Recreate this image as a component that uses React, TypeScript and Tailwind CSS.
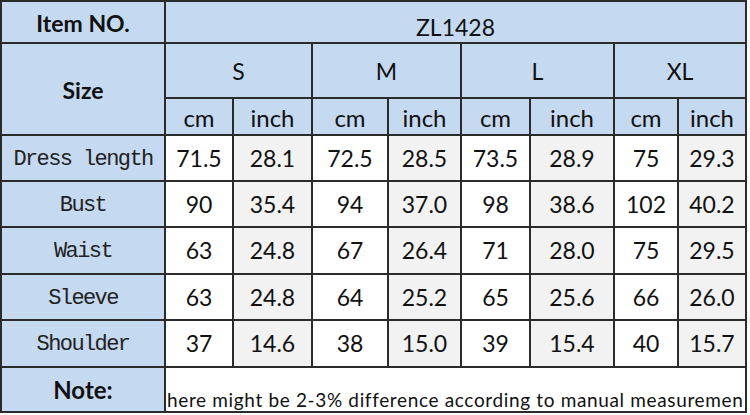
import React from 'react';

const sizes = ['S', 'M', 'L', 'XL'];

const rows: { label: string; values: string[] }[] = [
  { label: 'Dress length', values: ['71.5', '28.1', '72.5', '28.5', '73.5', '28.9', '75', '29.3'] },
  { label: 'Bust', values: ['90', '35.4', '94', '37.0', '98', '38.6', '102', '40.2'] },
  { label: 'Waist', values: ['63', '24.8', '67', '26.4', '71', '28.0', '75', '29.5'] },
  { label: 'Sleeve', values: ['63', '24.8', '64', '25.2', '65', '25.6', '66', '26.0'] },
  { label: 'Shoulder', values: ['37', '14.6', '38', '15.0', '39', '15.4', '40', '15.7'] },
];

const sans = "font-['Lato','Open_Sans',sans-serif]";
const mono = "font-['Liberation_Mono','DejaVu_Sans_Mono',monospace]";

export default function App() {
  return (
    <div className="w-[750px] h-[415px] bg-white text-[#111]">
      <div className="grid w-fit grid-cols-[162px_66px_77px_74px_71px_67px_82px_62px_66px] grid-rows-[40px_53px_35px_44px_44px_45px_44px_45px_43px] gap-[2px] bg-[#2b2b2b] p-[2px]">
        {/* header */}
        <div className={`${sans} flex items-center justify-center bg-[#c5d9f1] pt-[2px] text-[23px] font-bold`}>
          Item NO.
        </div>
        <div className={`${sans} col-span-8 flex items-end justify-center bg-[#c5d9f1] text-[23px] leading-[30px]`}>
          ZL1428
        </div>

        <div className={`${sans} row-span-2 flex items-center justify-center bg-[#c5d9f1] pt-[2px] text-[23px] font-bold`}>
          Size
        </div>
        {sizes.map((s) => (
          <div key={s} className={`${sans} col-span-2 flex items-center justify-center bg-[#c5d9f1] pt-[2px] text-[23px]`}>
            {s}
          </div>
        ))}
        {sizes.map((s) => (
          <React.Fragment key={s}>
            <div className={`${sans} flex items-center justify-center bg-[#c5d9f1] pt-[2px] text-[24px]`}>cm</div>
            <div className={`${sans} flex items-center justify-center bg-[#c5d9f1] pt-[2px] text-[24px]`}>inch</div>
          </React.Fragment>
        ))}

        {/* measurements */}
        {rows.map((r) => (
          <React.Fragment key={r.label}>
            <div className={`${mono} flex items-center justify-center bg-[#c5d9f1] pt-[2px] text-[22px] tracking-[-1.6px] text-[#222]`}>
              {r.label}
            </div>
            {r.values.map((v, i) => (
              <div
                key={i}
                className={`${sans} flex items-center justify-center text-[23px] ${i % 2 === 0 ? 'bg-white' : 'bg-[#f2f2f2]'}`}
              >
                {v}
              </div>
            ))}
          </React.Fragment>
        ))}

        {/* note */}
        <div className={`${sans} flex items-center justify-center bg-[#c5d9f1] text-[24px] font-bold`}>
          Note:
        </div>
        <div className={`${sans} col-span-8 flex items-end overflow-hidden whitespace-nowrap bg-white pl-[1px] text-[19px] leading-[22px] tracking-[0.65px]`}>
          here might be 2-3% difference according to manual measuremen
        </div>
      </div>
    </div>
  );
}
